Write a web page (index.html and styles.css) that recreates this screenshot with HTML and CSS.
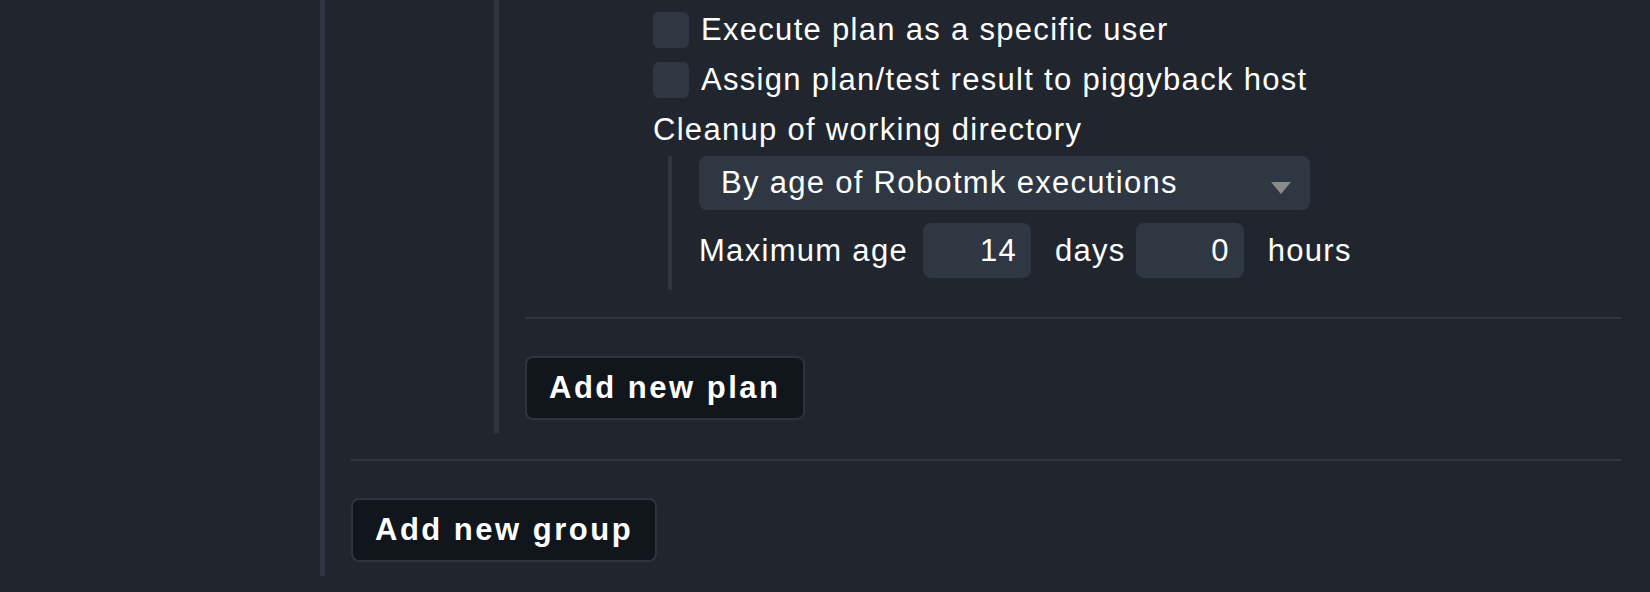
FILE: index.html
```html
<!DOCTYPE html>
<html lang="en">
<head>
  <meta charset="UTF-8">
  <title>Robotmk plan groups</title>
  <link rel="stylesheet" href="styles.css">
</head>
<body>

<div class="page">
  <div class="group-list">
    <div class="plan-list">
      <div class="plan">
        <label class="check-row">
          <input type="checkbox" class="checkbox">
          <span>Execute plan as a specific user</span>
        </label>
        <label class="check-row">
          <input type="checkbox" class="checkbox">
          <span>Assign plan/test result to piggyback host</span>
        </label>
        <div class="field-title">Cleanup of working directory</div>
        <div class="nested">
          <div class="dropdown">
            <span>By age of Robotmk executions</span>
            <svg class="dropdown-arrow" width="20" height="12" viewBox="0 0 20 12">
              <polygon points="0,0 20,0 10,12" fill="#8a8a8a"/>
            </svg>
          </div>
          <div class="age-row">
            <span>Maximum age</span>
            <input type="text" class="num-input first" value="14">
            <span class="unit">days</span>
            <input type="text" class="num-input" value="0">
            <span class="unit">hours</span>
          </div>
        </div>
      </div>
      <div class="divider plan-divider"></div>
      <button class="add-button">Add new plan</button>
    </div>
    <div class="divider group-divider"></div>
    <button class="add-button">Add new group</button>
  </div>
</div>

</body>
</html>
```

FILE: styles.css
```css
body {
  margin: 0;
  background-color: #21262e;
  color: #ffffff;
  font-family: "Liberation Sans", Arial, sans-serif;
  font-size: 31px;
  letter-spacing: 1.3px;
}
.page {
  padding: 0 29px 16px 320px;
}
.group-list {
  border-left: 5px solid #2f3641;
  padding: 0 0 14px 26px;
}
.plan-list {
  margin-left: 143px;
  border-left: 5px solid #2f3641;
  padding: 0 0 13px 26px;
}
.plan {
  padding: 12px 0 0 128px;
}
.check-row {
  display: flex;
  align-items: center;
  height: 36px;
  margin-bottom: 14px;
}
.checkbox {
  appearance: none;
  width: 36px;
  height: 36px;
  margin: 0 12px 0 0;
  background-color: #2f3743;
  border-radius: 6px;
  border: none;
}
.field-title {
  height: 36px;
  line-height: 36px;
}
.nested {
  margin: 8px 0 0 15px;
  border-left: 4px solid #2f3641;
  padding: 0 0 12px 27px;
}
.dropdown {
  display: flex;
  align-items: center;
  width: 611px;
  height: 54px;
  box-sizing: border-box;
  padding: 0 19px 0 22px;
  background-color: #2f3743;
  border-radius: 8px;
}
.dropdown-arrow {
  margin-left: auto;
  margin-top: 10px;
}
.age-row {
  display: flex;
  align-items: center;
  margin-top: 13px;
  height: 55px;
}
.num-input {
  width: 108px;
  height: 55px;
  box-sizing: border-box;
  padding: 0 14px;
  margin-left: 10px;
  border: none;
  border-radius: 8px;
  background-color: #2f3743;
  color: #ffffff;
  font-family: "Liberation Sans", Arial, sans-serif;
  font-size: 31px;
  letter-spacing: 1.3px;
  text-align: right;
}
.num-input.first {
  margin-left: 15px;
}
.unit {
  margin-left: 24px;
}
.divider {
  height: 2px;
  background-color: #2f3641;
}
.plan-divider {
  margin-top: 27px;
}
.group-divider {
  margin-top: 26px;
}
.add-button {
  display: block;
  height: 64px;
  margin-top: 37px;
  padding: 0 22px;
  background-color: #11161d;
  color: #ffffff;
  border: 2px solid #2e343e;
  border-radius: 8px;
  font-family: "Liberation Sans", Arial, sans-serif;
  font-size: 31px;
  font-weight: bold;
  letter-spacing: 2.5px;
  cursor: pointer;
}
```
